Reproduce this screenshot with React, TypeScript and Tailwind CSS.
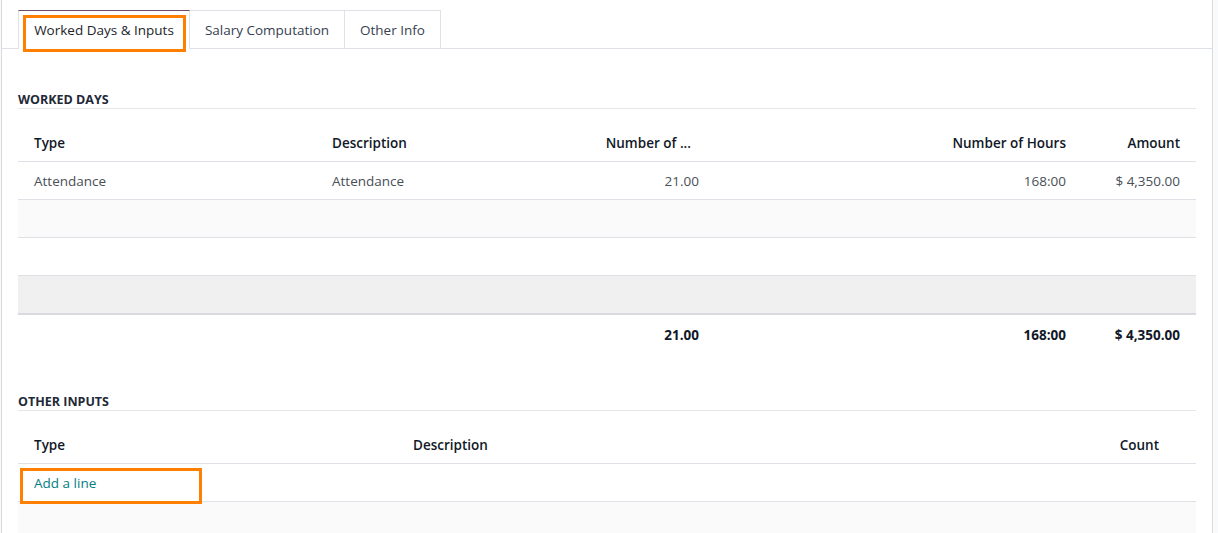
import React from "react";

const font = { fontFamily: '"Open Sans", "Noto Sans", sans-serif' };

function Tabs() {
  return (
    <div className="flex pl-4 pt-[10px] border-b border-[#dee2e6] h-[49px]">
      <div className="relative w-[172px] h-[39px] pt-px bg-white border-t border-t-[#714b67] border-x border-x-[#dee2e6] flex items-center justify-center text-[13.5px] text-[#212529] -mb-px">
        Worked Days &amp; Inputs
        <div className="absolute left-[4px] top-[4px] w-[163px] h-[37px] border-[3px] border-[#ff8000]" />
      </div>
      <div className="w-[155px] h-[38px] pt-px border-t border-r border-[#dee2e6] flex items-center justify-center text-[13.5px] text-[#374151]">
        Salary Computation
      </div>
      <div className="w-[96px] h-[38px] pt-px border-t border-r border-[#dee2e6] flex items-center justify-center text-[13.5px] text-[#374151]">
        Other Info
      </div>
    </div>
  );
}

const wdCols = "grid grid-cols-[298px_275px_124px_367px_114px]";
const oiCols = "grid grid-cols-[379px_678px_100px_21px]";
const row = "h-[38px] items-center pt-[2px]";

export default function App() {
  return (
    <div className="w-[1218px] h-[533px] overflow-hidden bg-[#f9fafb] flex" style={font}>
      <div className="ml-px w-[1212px] h-full bg-white border-x border-[#d8dadd]">
        <Tabs />
        <div className="px-4 pt-[40px]">
          <div className="h-[20px] flex items-end border-b border-[#e5e7eb] text-[12.5px] font-bold text-[#1f2937] uppercase leading-[16px]">
            Worked Days
          </div>
          <div className="mt-[15px] text-[13.5px]">
            <div className={`${wdCols} ${row} border-b border-[#dee2e6] font-semibold text-[#111827]`}>
              <div className="pl-4">Type</div>
              <div className="pl-4">Description</div>
              <div className="pr-6 text-right truncate">Number of ...</div>
              <div className="pr-4 text-right">Number of Hours</div>
              <div className="pr-4 text-right">Amount</div>
            </div>
            <div className={`${wdCols} ${row} border-b border-[#dee2e6] text-[#495057]`}>
              <div className="pl-4">Attendance</div>
              <div className="pl-4">Attendance</div>
              <div className="pr-4 text-right">21.00</div>
              <div className="pr-4 text-right">168:00</div>
              <div className="pr-4 text-right">$ 4,350.00</div>
            </div>
            <div className="h-[38px] border-b border-[#dee2e6] bg-[#fafafa]" />
            <div className="h-[38px] border-b border-[#dee2e6] bg-white" />
            <div className="h-[39px] border-b-2 border-[#d8dadd] bg-[#f0f0f0]" />
            <div className={`${wdCols} ${row} font-bold text-[#111827]`}>
              <div />
              <div />
              <div className="pr-4 text-right">21.00</div>
              <div className="pr-4 text-right">168:00</div>
              <div className="pr-4 text-right">$ 4,350.00</div>
            </div>
          </div>

          <div className="mt-[38px] h-[20px] flex items-end border-b border-[#e5e7eb] text-[12.5px] font-bold text-[#1f2937] uppercase leading-[16px]">
            Other Inputs
          </div>
          <div className="mt-[15px] text-[13.5px]">
            <div className={`${oiCols} ${row} border-b border-[#dee2e6] font-semibold text-[#111827]`}>
              <div className="pl-4">Type</div>
              <div className="pl-4">Description</div>
              <div className="pr-4 text-right">Count</div>
              <div />
            </div>
            <div className="relative h-[38px] pt-[2px] flex items-center border-b border-[#dee2e6] text-[#017e84]">
              <div className="pl-4">Add a line</div>
              <div className="absolute left-[2px] top-[4px] w-[182px] h-[36px] border-[3px] border-[#ff8000]" />
            </div>
            <div className="h-[60px] bg-[#fafafa]" />
          </div>
        </div>
      </div>
    </div>
  );
}
